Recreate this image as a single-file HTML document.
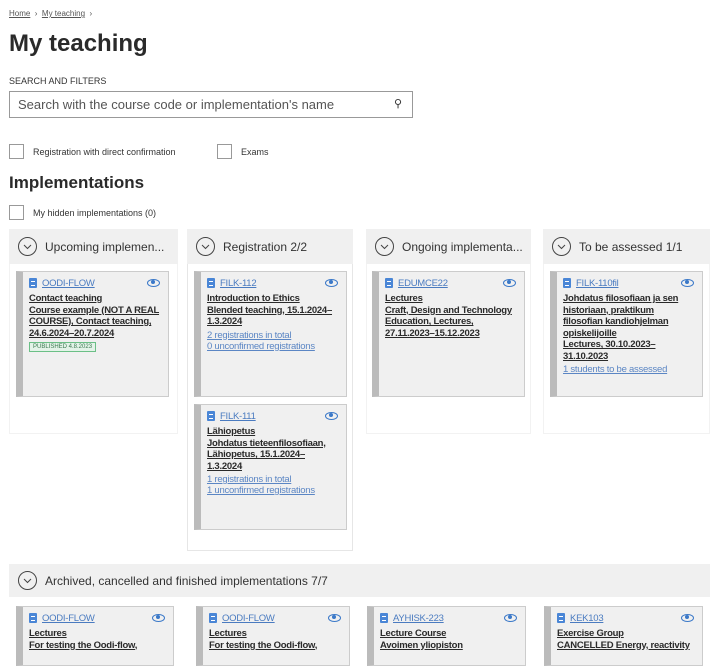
<!DOCTYPE html>
<html><head><meta charset="utf-8"><style>
*{margin:0;padding:0;box-sizing:border-box}
body{width:720px;height:661px;overflow:hidden;background:#fff;font-family:"Liberation Sans",sans-serif;color:#222;position:relative}
.a{position:absolute}
.bc{left:9px;top:9px;font-size:8px;color:#555}
.bc span{text-decoration:underline}
h1{position:absolute;left:9px;top:30px;font-size:24px;font-weight:bold;color:#2a2a2a}
.lab{left:9px;top:76px;font-size:9px;color:#333}
.search{left:9px;top:91px;width:404px;height:27px;border:1px solid #999;font-size:13px;color:#555;padding:5px 8px}
.cb{width:15px;height:15px;border:1px solid #999;background:#fff}
.cbt{font-size:9px;color:#333}
h2{position:absolute;left:9px;top:173px;font-size:17px;font-weight:bold;color:#2a2a2a}
.colh{background:#f0f0f0;height:35px;font-size:12px;color:#333;padding:0 0 0 9px;display:flex;align-items:center;white-space:nowrap;overflow:hidden}
.circ{width:19px;height:19px;border:1px solid #444;border-radius:50%;margin-right:8px;flex:none;display:flex;align-items:center;justify-content:center}
.colb{border:1px solid #e6e6e6;border-top:none}
.card{position:absolute;background:#f0f0f0;border:1px solid #ccc;border-left:7px solid #bbb;padding:4px 5px 0 6px;font-size:9.5px;letter-spacing:-0.25px;overflow:hidden}
.code{display:flex;align-items:center;height:14px;color:#4a7bc0;margin-bottom:3px}
.code u{margin-left:5px;flex:1}
.doc{width:8px;height:10px;background:#4a86d6;border-radius:1px;position:relative}
.doc:after{content:"";position:absolute;left:2px;top:3px;width:4px;height:3px;border-top:1px solid #fff;border-bottom:1px solid #fff}
.eye{width:13px;height:8px;border:1.5px solid #3a78c8;border-radius:50%;position:relative;margin-right:3px}
.eye:after{content:"";position:absolute;left:3px;top:0;width:4px;height:4px;background:#3a78c8;border-radius:50%}
.t{font-weight:bold;text-decoration:underline;line-height:11.5px;color:#2a2a2a}
.l{color:#5b86c4;text-decoration:underline;line-height:11px;margin-top:2px}
.pub{display:inline-block;margin-top:3px;border:1px solid #6bbf86;background:#e3f3e8;color:#3b7a50;font-size:6px;padding:1px 3px;letter-spacing:0}
</style></head><body>
<div class="a bc"><span>Home</span> &nbsp;›&nbsp; <span>My teaching</span> &nbsp;›</div>
<h1>My teaching</h1>
<div class="a lab">SEARCH AND FILTERS</div>
<div class="a search">Search with the course code or implementation's name<span style="position:absolute;right:10px;top:5px;font-size:11px;color:#333">⚲</span></div>
<div class="a cb" style="left:9px;top:144px"></div><div class="a cbt" style="left:33px;top:147px">Registration with direct confirmation</div>
<div class="a cb" style="left:217px;top:144px"></div><div class="a cbt" style="left:241px;top:147px">Exams</div>
<h2>Implementations</h2>
<div class="a cb" style="left:9px;top:205px"></div><div class="a cbt" style="left:33px;top:208px">My hidden implementations (0)</div>

<div class="a" style="left:9px;top:229px;width:169px"><div class="colh"><div class="circ"><svg width="9" height="6"><path d="M1 1l3.5 3.5L8 1" stroke="#444" fill="none"/></svg></div>Upcoming implemen...</div><div class="colb" style="height:170px;border-color:#f2f2f2"></div></div>
<div class="a" style="left:187px;top:229px;width:166px"><div class="colh"><div class="circ"><svg width="9" height="6"><path d="M1 1l3.5 3.5L8 1" stroke="#444" fill="none"/></svg></div>Registration 2/2</div><div class="colb" style="height:287px"></div></div>
<div class="a" style="left:366px;top:229px;width:165px"><div class="colh"><div class="circ"><svg width="9" height="6"><path d="M1 1l3.5 3.5L8 1" stroke="#444" fill="none"/></svg></div>Ongoing implementa...</div><div class="colb" style="height:170px;border-color:#f2f2f2"></div></div>
<div class="a" style="left:543px;top:229px;width:167px"><div class="colh"><div class="circ"><svg width="9" height="6"><path d="M1 1l3.5 3.5L8 1" stroke="#444" fill="none"/></svg></div>To be assessed 1/1</div><div class="colb" style="height:170px;border-color:#f2f2f2"></div></div>

<div class="card" style="left:16px;top:271px;width:153px;height:126px"><div class="code"><div class="doc"></div><u>OODI-FLOW</u><div class="eye"></div></div><div class="t">Contact teaching<br>Course example (NOT A REAL COURSE), Contact teaching, 24.6.2024–20.7.2024</div><div class="pub">PUBLISHED 4.8.2023</div></div>
<div class="card" style="left:194px;top:271px;width:153px;height:126px"><div class="code"><div class="doc"></div><u>FILK-112</u><div class="eye"></div></div><div class="t">Introduction to Ethics<br>Blended teaching, 15.1.2024–<br>1.3.2024</div><div class="l">2 registrations in total<br>0 unconfirmed registrations</div></div>
<div class="card" style="left:194px;top:404px;width:153px;height:126px"><div class="code"><div class="doc"></div><u>FILK-111</u><div class="eye"></div></div><div class="t">Lähiopetus<br>Johdatus tieteenfilosofiaan,<br>Lähiopetus, 15.1.2024–<br>1.3.2024</div><div class="l">1 registrations in total<br>1 unconfirmed registrations</div></div>
<div class="card" style="left:372px;top:271px;width:153px;height:126px"><div class="code"><div class="doc"></div><u>EDUMCE22</u><div class="eye"></div></div><div class="t">Lectures<br>Craft, Design and Technology<br>Education, Lectures,<br>27.11.2023–15.12.2023</div></div>
<div class="card" style="left:550px;top:271px;width:153px;height:126px"><div class="code"><div class="doc"></div><u>FILK-110fil</u><div class="eye"></div></div><div class="t">Johdatus filosofiaan ja sen<br>historiaan, praktikum<br>filosofian kandiohjelman<br>opiskelijoille<br>Lectures, 30.10.2023–<br>31.10.2023</div><div class="l">1 students to be assessed</div></div>

<div class="a" style="left:9px;top:564px;width:701px"><div class="colh" style="height:33px"><div class="circ"><svg width="9" height="6"><path d="M1 1l3.5 3.5L8 1" stroke="#444" fill="none"/></svg></div>Archived, cancelled and finished implementations 7/7</div></div>
<div class="card" style="left:16px;top:606px;width:158px;height:60px"><div class="code"><div class="doc"></div><u>OODI-FLOW</u><div class="eye"></div></div><div class="t">Lectures<br>For testing the Oodi-flow,</div></div>
<div class="card" style="left:196px;top:606px;width:154px;height:60px"><div class="code"><div class="doc"></div><u>OODI-FLOW</u><div class="eye"></div></div><div class="t">Lectures<br>For testing the Oodi-flow,</div></div>
<div class="card" style="left:367px;top:606px;width:159px;height:60px"><div class="code"><div class="doc"></div><u>AYHISK-223</u><div class="eye"></div></div><div class="t">Lecture Course<br>Avoimen yliopiston</div></div>
<div class="card" style="left:544px;top:606px;width:159px;height:60px"><div class="code"><div class="doc"></div><u>KEK103</u><div class="eye"></div></div><div class="t">Exercise Group<br>CANCELLED Energy, reactivity</div></div>
</body></html>
